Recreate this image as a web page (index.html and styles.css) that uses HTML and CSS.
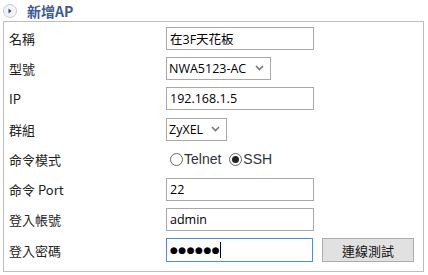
FILE: index.html
```html
<!DOCTYPE html>
<html>
<head>
    <title>新增AP</title>
    <link rel="stylesheet" href="styles.css">
</head>
<body>
    <div class="title">
        <span class="arrow">
            <svg width="14" height="14" viewBox="0 0 14 14">
                <circle cx="7" cy="7" r="6.5" fill="#f4f4f4" stroke="#c8c8c8"/>
                <path d="M5.5 4.5 L8.5 7 L5.5 9.5 Z" fill="#2b4a8a"/>
            </svg>
        </span>
        <h1>新增AP</h1>
    </div>

    <div class="panel">
        <div class="row">
            <label>名稱</label>
            <input type="text" class="field" value="在3F天花板">
        </div>
        <div class="row">
            <label>型號</label>
            <select class="model">
                <option>NWA5123-AC</option>
            </select>
        </div>
        <div class="row">
            <label>IP</label>
            <input type="text" class="field" value="192.168.1.5">
        </div>
        <div class="row">
            <label>群組</label>
            <select class="group">
                <option>ZyXEL</option>
            </select>
        </div>
        <div class="row">
            <label>命令模式</label>
            <div class="radios">
                <span class="radio"><span class="dot"></span>Telnet</span>
                <span class="radio"><span class="dot on"></span>SSH</span>
            </div>
        </div>
        <div class="row">
            <label>命令 Port</label>
            <input type="text" class="field" value="22">
        </div>
        <div class="row">
            <label>登入帳號</label>
            <input type="text" class="field" value="admin">
        </div>
        <div class="row">
            <label>登入密碼</label>
            <div class="field password"><span class="dots">●●●●●●</span><span class="caret"></span></div>
            <button>連線測試</button>
        </div>
    </div>
</body>
</html>
```

FILE: styles.css
```css
body {
  margin: 0;
  padding: 2px 4px 0 3px;
  font-family: "Noto Sans CJK TC", "Open Sans", sans-serif;
  font-size: 13px;
  color: #222;
  background: #fff;
}

.title {
  display: flex;
  align-items: center;
  height: 17px;
  margin-bottom: 2px;
}

.arrow {
  display: flex;
  width: 14px;
  height: 14px;
}

h1 {
  margin: 0 0 0 10px;
  font-size: 14px;
  font-weight: bold;
  color: #3b5a9a;
}

.panel {
  border: 1px solid #bdbdbd;
  height: 251px;
  padding-top: 1px;
  box-sizing: border-box;
}

.row {
  display: flex;
  align-items: center;
  height: 30.3px;
}

.row label {
  width: 162px;
  padding-left: 5px;
  box-sizing: border-box;
  flex: none;
}

.field {
  width: 148px;
  height: 23px;
  box-sizing: border-box;
  border: 1px solid #a9a9a9;
  padding: 0 3px;
  font-family: "Open Sans", "Noto Sans CJK TC", sans-serif;
  font-size: 12.5px;
  color: #000;
  outline: none;
}

.password {
  display: flex;
  align-items: center;
  border-color: #4a90d9;
  width: 147px;
  height: 24px;
}

.dots {
  font-family: "DejaVu Sans", sans-serif;
  font-size: 9px;
  letter-spacing: 0.5px;
}

.caret {
  width: 1px;
  height: 16px;
  background: #000;
}

select {
  appearance: none;
  height: 23px;
  border: 1px solid #a9a9a9;
  border-radius: 0;
  background: #fff url("data:image/svg+xml,%3Csvg xmlns='http://www.w3.org/2000/svg' width='9' height='6'%3E%3Cpath d='M1 1 L4.5 4.5 L8 1' fill='none' stroke='%23777' stroke-width='1.6'/%3E%3C/svg%3E") no-repeat right 6px center;
  font-family: "Open Sans", sans-serif;
  font-size: 12.5px;
  color: #000;
  padding: 0 2px;
}

.model {
  width: 105px;
}

.group {
  width: 61px;
}

.radios {
  display: flex;
  gap: 8px;
  padding-left: 4px;
  font-family: "Liberation Sans", sans-serif;
  font-size: 14px;
  color: #333;
}

.radio {
  display: flex;
  align-items: center;
}

.dot {
  width: 13px;
  height: 13px;
  border: 1px solid #666;
  border-radius: 50%;
  margin-right: 1px;
  box-sizing: border-box;
  position: relative;
}

.dot.on::after {
  content: "";
  position: absolute;
  left: 2px;
  top: 2px;
  width: 7px;
  height: 7px;
  border-radius: 50%;
  background: #222;
}

button {
  margin-left: 9px;
  width: 92px;
  height: 24px;
  border: 1px solid #adadad;
  background: #e1e1e1;
  font-family: "Noto Sans CJK TC", sans-serif;
  font-size: 13px;
  color: #111;
  padding: 0;
}
```
